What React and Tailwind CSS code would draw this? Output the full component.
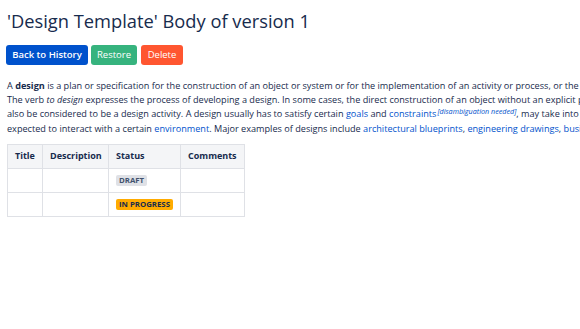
const link = "text-[#0052cc]";

function Lozenge({ children, tone }) {
  const tones = {
    gray: "bg-[#dfe1e6] text-[#42526e]",
    yellow: "bg-[#ffab00] text-[#172b4d]",
  };
  return (
    <span className={`inline-block whitespace-nowrap rounded-[2px] px-[3px] text-[7.8px] leading-[11px] font-bold uppercase ${tones[tone]}`}>
      {children}
    </span>
  );
}

const cell = "border border-[#dfe1e6]";
const head = "border border-[#dfe1e6] px-[7px] text-left font-bold";

export default function App() {
  return (
    <div className="w-[580px] h-[329px] overflow-hidden bg-white text-[#172b4d] font-['Open_Sans',sans-serif]">
      <div className="px-[7px] pt-[8px]">
        <h1 className="text-[18.3px] leading-[26px] font-medium text-[#172b4d] whitespace-nowrap">
          'Design Template' Body of version 1
        </h1>

        <div className="flex gap-[3px] mt-[11px] -ml-[1px]">
          <button className="h-[20px] w-[82px] rounded-[3px] bg-[#0052cc] text-white text-[9.5px] font-semibold">
            Back to History
          </button>
          <button className="h-[20px] w-[46px] rounded-[3px] bg-[#36b37e] text-white text-[9.5px]">
            Restore
          </button>
          <button className="h-[20px] w-[42px] ml-[1px] rounded-[3px] bg-[#ff5630] text-white text-[9.5px]">
            Delete
          </button>
        </div>

        <div className="mt-[14px] text-[9.15px] leading-[13.5px] whitespace-nowrap">
          <p>
            A <b>design</b> is a plan or specification for the construction of an object or system or for the implementation of an activity or process, or the result of that plan or specification in the form of a prototype, product or process.
          </p>
          <p>
            The verb <i>to design</i> expresses the process of developing a design. In some cases, the direct construction of an object without an explicit prior plan (such as in craftwork, some engineering, coding, and graphic design) may
          </p>
          <p className="leading-[15px]">
            also be considered to be a design activity. A design usually has to satisfy certain <span className={link}>goals</span> and{" "}
            <span className={link}>constraints</span>
            <span className="relative -top-[3px] ml-[1px] text-[7.2px] italic text-[#0052cc]">[disambiguation needed]</span>, may take into account aesthetic, functional, economic, or socio-political considerations, and is
          </p>
          <p>
            expected to interact with a certain <span className={link}>environment</span>. Major examples of designs include{" "}
            <span className={link}>architectural blueprints</span>, <span className={link}>engineering drawings</span>,{" "}
            <span className={link}>business processes</span>, <span className={link}>circuit diagrams</span>, and{" "}
            <span className={link}>sewing patterns</span>.
          </p>
        </div>

        <table className="mt-[8px] w-[237px] table-fixed border-collapse text-[9px]">
          <thead>
            <tr className="bg-[#f4f5f7] h-[24px]">
              <th className={`${head} w-[35px]`}>Title</th>
              <th className={`${head} w-[66px]`}>Description</th>
              <th className={`${head} w-[72px]`}>Status</th>
              <th className={`${head} w-[64px]`}>Comments</th>
            </tr>
          </thead>
          <tbody>
            <tr className="h-[24px]">
              <td className={cell}></td>
              <td className={cell}></td>
              <td className={`${cell} px-[7px]`}><Lozenge tone="gray">Draft</Lozenge></td>
              <td className={cell}></td>
            </tr>
            <tr className="h-[24px]">
              <td className={cell}></td>
              <td className={cell}></td>
              <td className={`${cell} px-[7px]`}><Lozenge tone="yellow">In Progress</Lozenge></td>
              <td className={cell}></td>
            </tr>
          </tbody>
        </table>
      </div>
    </div>
  );
}
